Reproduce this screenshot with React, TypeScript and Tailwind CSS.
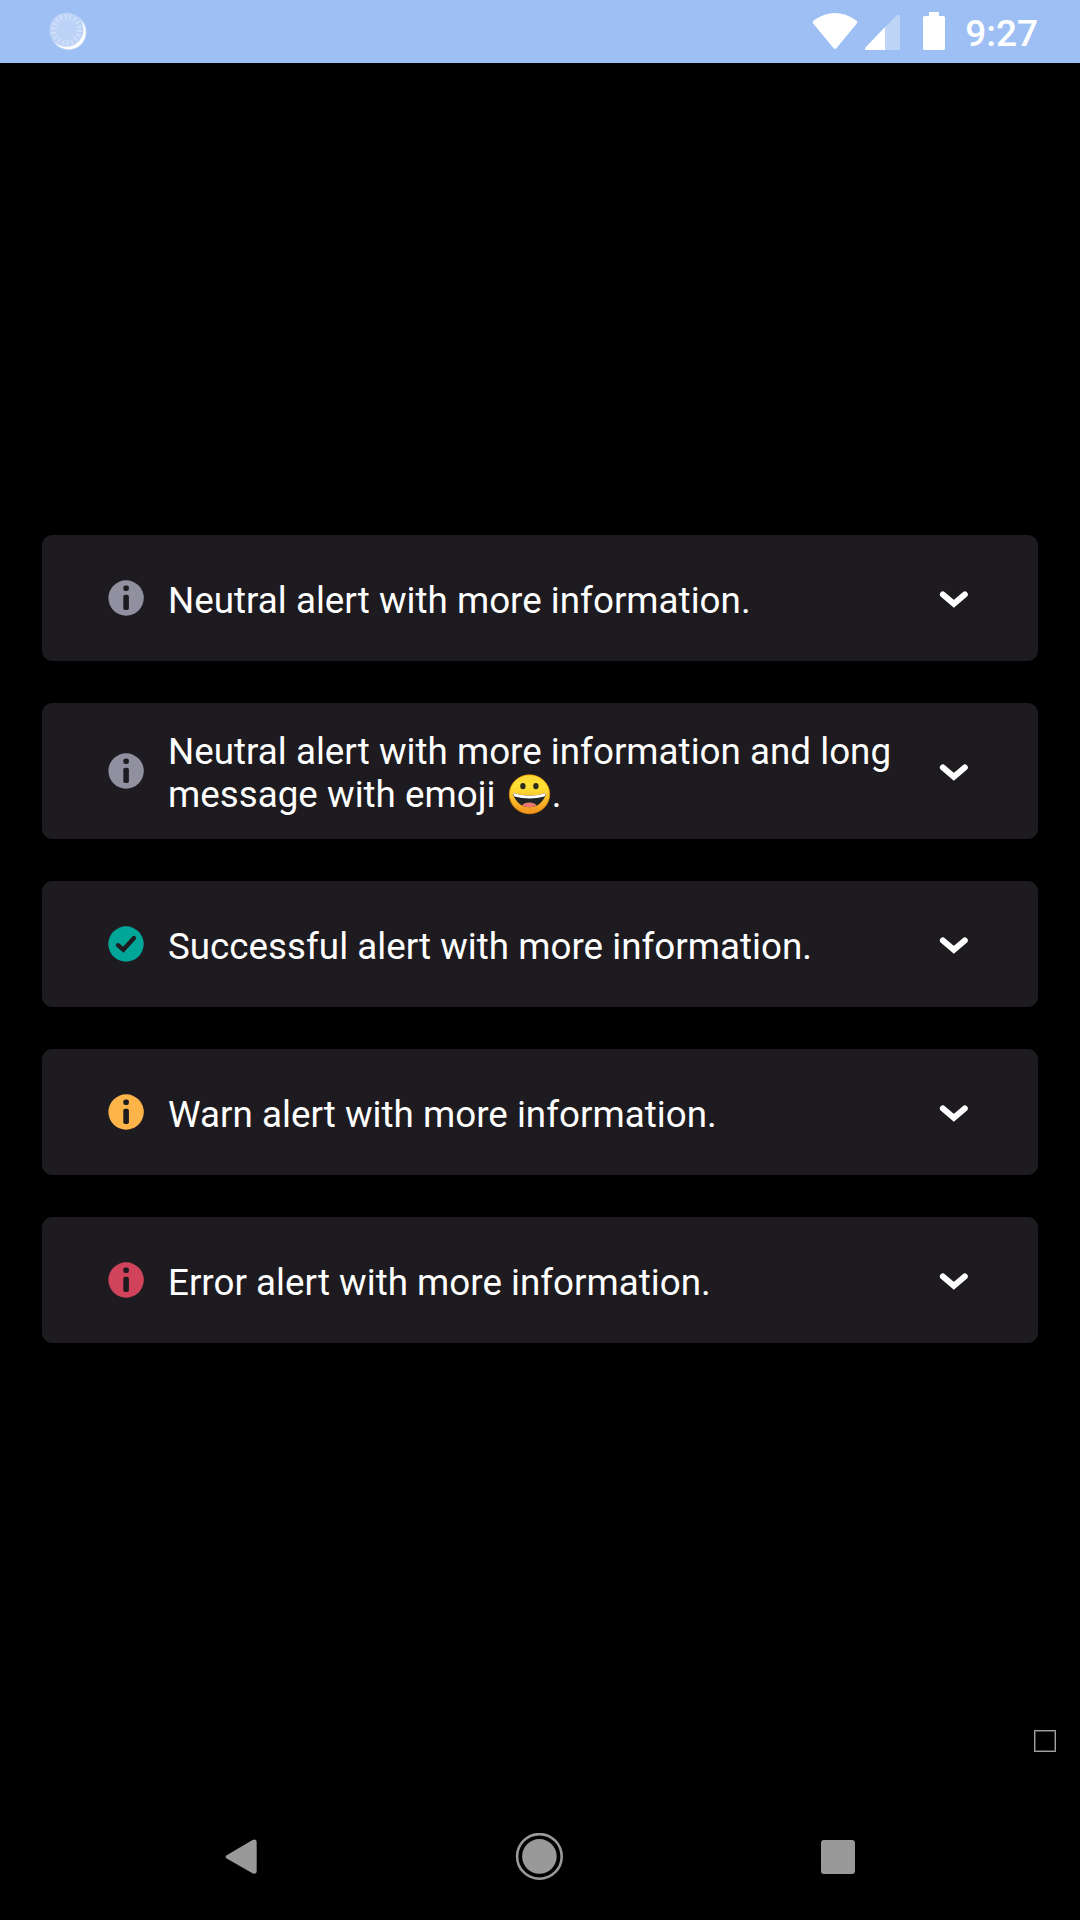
import type { ReactNode } from "react";

function InfoIcon({ color }: { color: string }) {
  return (
    <svg className="size-9 shrink-0" viewBox="0 0 36 36">
      <circle cx="18.1" cy="18" r="17.7" fill={color} />
      <rect x="15.3" y="5.6" width="5.6" height="5.4" rx="2.2" fill="#1e1b20" />
      <rect x="15.3" y="14.7" width="5.6" height="15.4" rx="1.8" fill="#1e1b20" />
    </svg>
  );
}

function CheckIcon() {
  return (
    <svg className="size-9 shrink-0" viewBox="0 0 36 36">
      <circle cx="18" cy="18" r="17.7" fill="#00a698" />
      <path d="M10 19.2l5.3 4.6L26 12" fill="none" stroke="#1e1b20" strokeWidth="4.3" strokeLinecap="round" />
    </svg>
  );
}

function Chevron() {
  return (
    <svg className="h-5 w-8 shrink-0 overflow-visible" viewBox="0 0 32 20">
      <path d="M4.9 6.5L15.85 15.9 26.8 6.5" fill="none" stroke="#fff" strokeWidth="6" strokeLinecap="round" />
    </svg>
  );
}

function Emoji() {
  return (
    <svg className="-my-2 mr-px ml-[3px] inline-block h-[43px] w-[43px] align-[-1px]" viewBox="0 0 43 43">
      <defs>
        <linearGradient id="face" x1="0" y1="0" x2="0" y2="1">
          <stop offset="0" stopColor="#fdd835" />
          <stop offset="0.3" stopColor="#fee133" />
          <stop offset="0.6" stopColor="#fbc22d" />
          <stop offset="0.9" stopColor="#f59a20" />
        </linearGradient>
        <clipPath id="mouth">
          <path d="M5 20Q21.5 25.5 38 20C37 26.5 31 34.2 21.5 34.2S6 26.5 5 20Z" />
        </clipPath>
      </defs>
      <ellipse cx="21.5" cy="21.3" rx="20.2" ry="19.5" fill="url(#face)" stroke="#eb8f00" strokeWidth="0.7" />
      <ellipse cx="14.9" cy="13.1" rx="2.7" ry="3.2" fill="#2b2b20" />
      <ellipse cx="27.9" cy="13.1" rx="2.7" ry="3.2" fill="#2b2b20" />
      <g clipPath="url(#mouth)">
        <rect width="43" height="43" fill="#1f2323" />
        <ellipse cx="21.3" cy="33.2" rx="7.2" ry="3.8" fill="#ed7770" />
        <path d="M4 19Q21.5 25 39 19L36.5 23.5Q21.5 27.5 6.5 23.5Z" fill="#fff" />
      </g>
    </svg>
  );
}

function Alert({ icon, tall = false, children }: { icon: ReactNode; tall?: boolean; children: ReactNode }) {
  return (
    <div className={`flex items-center rounded-[10px] bg-[#1e1b20] pr-[68px] pl-[66px] ${tall ? "h-[136px]" : "h-[126px]"}`}>
      {icon}
      <p className="ml-6 flex-1 pt-1 text-[36.75px] leading-[43px] tracking-[0.015px] whitespace-nowrap text-white">{children}</p>
      <Chevron />
    </div>
  );
}

function StatusBar() {
  return (
    <header className="flex h-[63px] items-center justify-between bg-[#9dbff3] pr-[42px] pl-[49px]">
      <svg className="size-[38px] overflow-visible" viewBox="0 0 38 38">
        <circle cx="19.3" cy="18.9" r="18.6" fill="#fff" fillOpacity="0.22" />
        <circle cx="19.7" cy="19.3" r="17.1" fill="#fff" />
        <circle cx="17.5" cy="16.8" r="17" fill="#bcd3f7" />
        <circle cx="17.5" cy="16.8" r="13" fill="none" stroke="#cfdff9" strokeWidth="5.2" strokeDasharray="2.1 2.438" />
      </svg>
      <div className="flex items-center">
        <svg className="h-[63px] w-[152px] overflow-visible" viewBox="0 0 152 63">
          <path d="M1 20.3Q22 5.8 43 20.3Q45.2 21.8 43.6 23.8L23.6 48Q22 50 20.4 48L.4 23.8Q-1.2 21.8 1 20.3Z" fill="#fff" />
          <path d="M84.7 14.8Q87 14.2 87 16.5V48.5Q87 50 85.5 50H72V27Z" fill="#bed5f7" />
          <path d="M72 27V50H53.5Q51 50 52.5 47.4Z" fill="#fff" />
          <path d="M116 12h10v4h4.5q1.5 0 1.5 1.5v31q0 1.5-1.5 1.5h-19q-1.5 0-1.5-1.5v-31q0-1.5 1.5-1.5h4.5Z" fill="#fff" />
        </svg>
        <span className="pt-1 text-[37px] leading-[43px] font-medium text-white">9:27</span>
      </div>
    </header>
  );
}

export default function App() {
  return (
    <div className="flex h-[1920px] w-[1080px] flex-col overflow-hidden bg-black font-['Roboto',sans-serif]">
      <StatusBar />
      <main className="flex flex-1 flex-col px-[42px] pt-[472px]">
        <div className="flex flex-col gap-[42px]">
          <Alert icon={<InfoIcon color="#9090a0" />}>Neutral alert with more information.</Alert>
          <Alert tall icon={<InfoIcon color="#9090a0" />}>
            Neutral alert with more information and long
            <br />
            message with emoji <Emoji />.
          </Alert>
          <Alert icon={<CheckIcon />}>Successful alert with more information.</Alert>
          <Alert icon={<InfoIcon color="#ffb44a" />}>Warn alert with more information.</Alert>
          <Alert icon={<InfoIcon color="#d1435b" />}>Error alert with more information.</Alert>
        </div>
      </main>
      <div className="mr-6 mb-[42px] size-[22px] self-end border border-[#a0a0a0] inset-ring inset-ring-[#484848]" />
      <nav className="flex h-[126px] items-center justify-between px-[225px]">
        <svg className="h-9 w-8" viewBox="0 0 32 36">
          <path d="M1.7 16.2L27.5 .9Q31.7-.7 31.7 3V32Q31.7 35.8 27.5 34.2L1.7 19.4Q-.5 17.8 1.7 16.2Z" fill="#999" />
        </svg>
        <svg className="size-12" viewBox="0 0 48 48">
          <circle cx="24.4" cy="23.4" r="22.3" fill="none" stroke="#999" strokeWidth="2.6" />
          <circle cx="24.4" cy="23.4" r="17.3" fill="#999" />
        </svg>
        <div className="size-[34px] rounded-[3px] bg-[#999]" />
      </nav>
    </div>
  );
}
